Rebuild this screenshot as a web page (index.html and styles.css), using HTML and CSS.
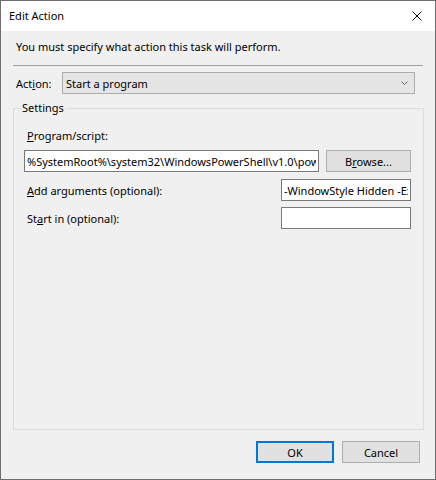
FILE: index.html
```html
<!DOCTYPE html>
<html lang="en">

<head>
  <meta charset="UTF-8" />
  <meta name="viewport" content="width=device-width, initial-scale=1.0" />
  <title>Edit Action</title>
  <link rel="stylesheet" href="styles.css">
</head>

<body>
  <div class="window">
    <div class="titlebar">
      <span class="title">Edit Action</span>
      <button class="close" aria-label="Close">
        <svg width="10" height="10" viewBox="0 0 10 10">
          <path d="M0.5 0.5 L9.5 9.5 M9.5 0.5 L0.5 9.5" stroke="#111" stroke-width="1" fill="none" />
        </svg>
      </button>
    </div>

    <div class="client">
      <div class="prompt">You must specify what action this task will perform.</div>
      <div class="separator"></div>

      <div class="action-row">
        <label class="action-label">Act<u>i</u>on:</label>
        <div class="combo">
          <span>Start a program</span>
          <svg class="chevron" width="7" height="4" viewBox="0 0 7 4">
            <path d="M0.5 0.5 L3.5 3.5 L6.5 0.5" stroke="#606060" stroke-width="1" fill="none" />
          </svg>
        </div>
      </div>

      <fieldset class="settings">
        <legend>Settings</legend>

        <div class="field-label"><u>P</u>rogram/script:</div>
        <div class="program-row">
          <input class="textbox program" type="text" readonly
            value="%SystemRoot%\system32\WindowsPowerShell\v1.0\powershell.exe">
          <button class="btn browse">B<u>r</u>owse...</button>
        </div>

        <div class="option-row">
          <label><u>A</u>dd arguments (optional):</label>
          <input class="textbox small" type="text" readonly
            value="-WindowStyle Hidden -ExecutionPolicy Bypass -File script.ps1">
        </div>

        <div class="option-row">
          <label>St<u>a</u>rt in (optional):</label>
          <input class="textbox small" type="text" readonly value="">
        </div>
      </fieldset>

      <div class="footer">
        <button class="btn default">OK</button>
        <button class="btn">Cancel</button>
      </div>
    </div>
  </div>
</body>

</html>
```

FILE: styles.css
```css
* {
  box-sizing: border-box;
  margin: 0;
  padding: 0;
  font-family: 'Noto Sans', 'Open Sans', sans-serif;
  font-size: 11px;
}

body {
  background-color: #f0f0f0;
  color: #000;
  width: 436px;
  height: 480px;
  overflow: hidden;
}

.window {
  width: 436px;
  height: 480px;
  border: 1px solid #6e6e6e;
  display: flex;
  flex-direction: column;
}

.titlebar {
  height: 30px;
  background-color: #fff;
  display: flex;
  align-items: center;
  justify-content: space-between;
  padding-left: 8px;
}

.title {
  line-height: 16px;
}

.close {
  width: 46px;
  height: 30px;
  border: none;
  background: transparent;
  display: flex;
  align-items: center;
  justify-content: center;
  padding-left: 10px;
}

.client {
  flex: 1;
  display: flex;
  flex-direction: column;
  padding: 8px 11px 16px 12px;
}

.prompt {
  line-height: 16px;
  padding-left: 3px;
}

.separator {
  height: 1px;
  width: 410px;
  margin-top: 10px;
  background-color: #a0a0a0;
}

.action-row {
  display: flex;
  align-items: center;
  margin-top: 6px;
  height: 22px;
}

.action-label {
  width: 49px;
  padding-left: 3px;
}

.combo {
  width: 353px;
  height: 22px;
  background-color: #e5e5e5;
  border: 1px solid #adadad;
  display: flex;
  align-items: center;
  justify-content: space-between;
  padding: 0 6px 0 3px;
}

.settings {
  flex: 1;
  margin-top: 6px;
  border: 1px solid #dcdcdc;
  padding: 12px 12px 0 10px;
}

.settings legend {
  line-height: 16px;
  padding: 0 1px;
  margin-left: -3px;
}

.field-label {
  line-height: 16px;
  padding-left: 3px;
}

.program-row {
  display: flex;
  justify-content: space-between;
  margin-top: 6px;
}

.textbox {
  height: 22px;
  border: 1px solid #7a7a7a;
  background-color: #fff;
  padding: 0 2px;
  outline: none;
  color: #000;
}

.textbox.program {
  width: 295px;
}

.textbox.small {
  width: 130px;
}

.option-row {
  display: flex;
  align-items: center;
  justify-content: space-between;
  margin-top: 7px;
  padding-left: 3px;
}

.option-row + .option-row {
  margin-top: 6px;
}

.btn {
  height: 22px;
  width: 78px;
  background-color: #e1e1e1;
  border: 1px solid #adadad;
  color: #000;
}

.btn.browse {
  width: 85px;
}

.btn.default {
  border: 2px solid #0078d7;
}

.footer {
  display: flex;
  justify-content: flex-end;
  gap: 8px;
  margin-top: 11px;
  padding-right: 4px;
}
```
